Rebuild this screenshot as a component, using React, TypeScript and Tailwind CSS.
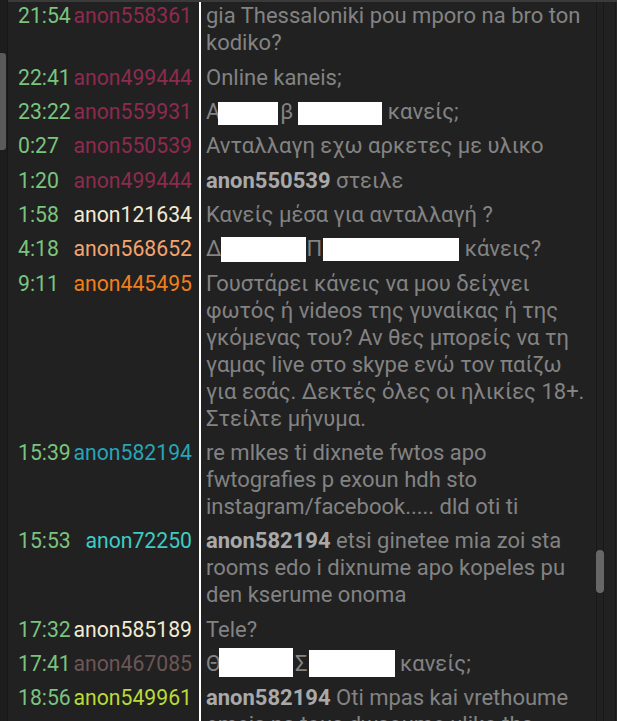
import React from "react";

type Seg = { t: string; b?: boolean } | { box: [number, number, number, number, number] };
type Row = { time: string; name: string; color: string; lines: Seg[][] };

const MAROON = "#8d2b4e";
const rows: Row[] = [
  { time: "21:54", name: "anon558361", color: MAROON, lines: [[{ t: "gia Thessaloniki pou mporo na bro ton" }], [{ t: "kodiko?" }]] },
  { time: "22:41", name: "anon499444", color: MAROON, lines: [[{ t: "Online kaneis;" }]] },
  { time: "23:22", name: "anon559931", color: MAROON, lines: [[{ t: "Α" }, { box: [60, 23, 4, -2, 2] }, { t: "β" }, { box: [84, 23, 4, 5, 0] }, { t: " κανείς;" }]] },
  { time: "0:27", name: "anon550539", color: MAROON, lines: [[{ t: "Ανταλλαγη εχω αρκετες με υλικο" }]] },
  { time: "1:20", name: "anon499444", color: MAROON, lines: [[{ t: "anon550539", b: true }, { t: " στειλε" }]] },
  { time: "1:58", name: "anon121634", color: "#f2ead0", lines: [[{ t: "Κανείς μέσα για ανταλλαγή ?" }]] },
  { time: "4:18", name: "anon568652", color: "#f3a46f", lines: [[{ t: "Δ" }, { box: [85, 25, 2, -1, 1] }, { t: "Π" }, { box: [136, 23, 3, 1, 0] }, { t: " κάνεις?" }]] },
  {
    time: "9:11",
    name: "anon445495",
    color: "#ef7f1d",
    lines: [
      [{ t: "Γουστάρει κάνεις να μου δείχνει" }],
      [{ t: "φωτός ή videos της γυναίκας ή της" }],
      [{ t: "γκόμενας του? Αν θες μπορείς να τη" }],
      [{ t: "γαμας live στο skype ενώ τον παίζω" }],
      [{ t: "για εσάς. Δεκτές όλες οι ηλικίες 18+." }],
      [{ t: "Στείλτε μήνυμα." }],
    ],
  },
  {
    time: "15:39",
    name: "anon582194",
    color: "#28a4b6",
    lines: [[{ t: "re mlkes ti dixnete fwtos apo" }], [{ t: "fwtografies p exoun hdh sto" }], [{ t: "instagram/facebook..... dld oti ti" }]],
  },
  {
    time: "15:53",
    name: "anon72250",
    color: "#3ecbc3",
    lines: [
      [{ t: "anon582194", b: true }, { t: " etsi ginetee mia zoi sta" }],
      [{ t: "rooms edo i dixnume apo kopeles pu" }],
      [{ t: "den kserume onoma" }],
    ],
  },
  { time: "17:32", name: "anon585189", color: "#f2ead2", lines: [[{ t: "Tele?" }]] },
  { time: "17:41", name: "anon467085", color: "#6c5656", lines: [[{ t: "Θ" }, { box: [74, 29, -2, -2, 2] }, { t: "Σ" }, { box: [86, 27, 0, 1, 0] }, { t: " κανείς;" }]] },
  {
    time: "18:56",
    name: "anon549961",
    color: "#bcda36",
    lines: [[{ t: "anon582194", b: true }, { t: " Oti mpas kai vrethoume" }], [{ t: "emeis na tous dwsoume uliko tha" }]],
  },
];

function Line({ segs }: { segs: Seg[] }) {
  return (
    <div className="whitespace-nowrap">
      {segs.map((s, i) =>
        "box" in s ? (
          <span
            key={i}
            className="inline-block align-top bg-white"
            style={{ width: s.box[0], height: s.box[1], marginTop: s.box[2], marginLeft: s.box[3], marginRight: s.box[4] }}
          />
        ) : s.b ? (
          <span key={i} className="font-bold text-[#a9a9a9]">
            {s.t}
          </span>
        ) : (
          <span key={i}>{s.t}</span>
        )
      )}
    </div>
  );
}

export default function App() {
  return (
    <div
      className="flex h-[721px] w-[617px] overflow-hidden bg-[#212121] leading-[27px]"
      style={{ fontFamily: "Roboto, 'Noto Sans', sans-serif" }}
    >
      <div className="relative w-[8px] shrink-0 border-r border-[#171717] bg-[#1d1d1d]">
        <div className="absolute left-0 top-[53px] h-[97px] w-[6px] rounded-r-[3px] bg-[#5a5a5a]" />
      </div>
      <div className="flex flex-1 border-t-2 border-[#3a3a3a]">
        <div className="flex-1 overflow-hidden">
          <div className="-mt-[3.26px]">
            {rows.map((r, i) => (
              <div key={i} className="flex">
                <div className="flex w-[191px] shrink-0 py-[3.66px] pl-[10px] pr-[7px] text-[21.2px]">
                  <span className="text-[#7ac47e]">{r.time}</span>
                  <span className="ml-auto" style={{ color: r.color }}>
                    {r.name}
                  </span>
                </div>
                <div className="flex-1 border-l-2 border-white py-[3.66px] pl-[5px] text-[22px] text-[#838383]">
                  {r.lines.map((l, j) => (
                    <Line key={j} segs={l} />
                  ))}
                </div>
              </div>
            ))}
          </div>
        </div>
        <div className="relative flex w-[21px] shrink-0">
          <div className="w-[8px] border-x border-[#191919]" />
          <div className="flex-1 border-r border-[#191919]" />
          <div className="w-[1px] bg-[#262626]" />
          <div className="absolute left-0 top-[548px] h-[43px] w-[8px] rounded-full bg-[#676767]" />
        </div>
      </div>
    </div>
  );
}
